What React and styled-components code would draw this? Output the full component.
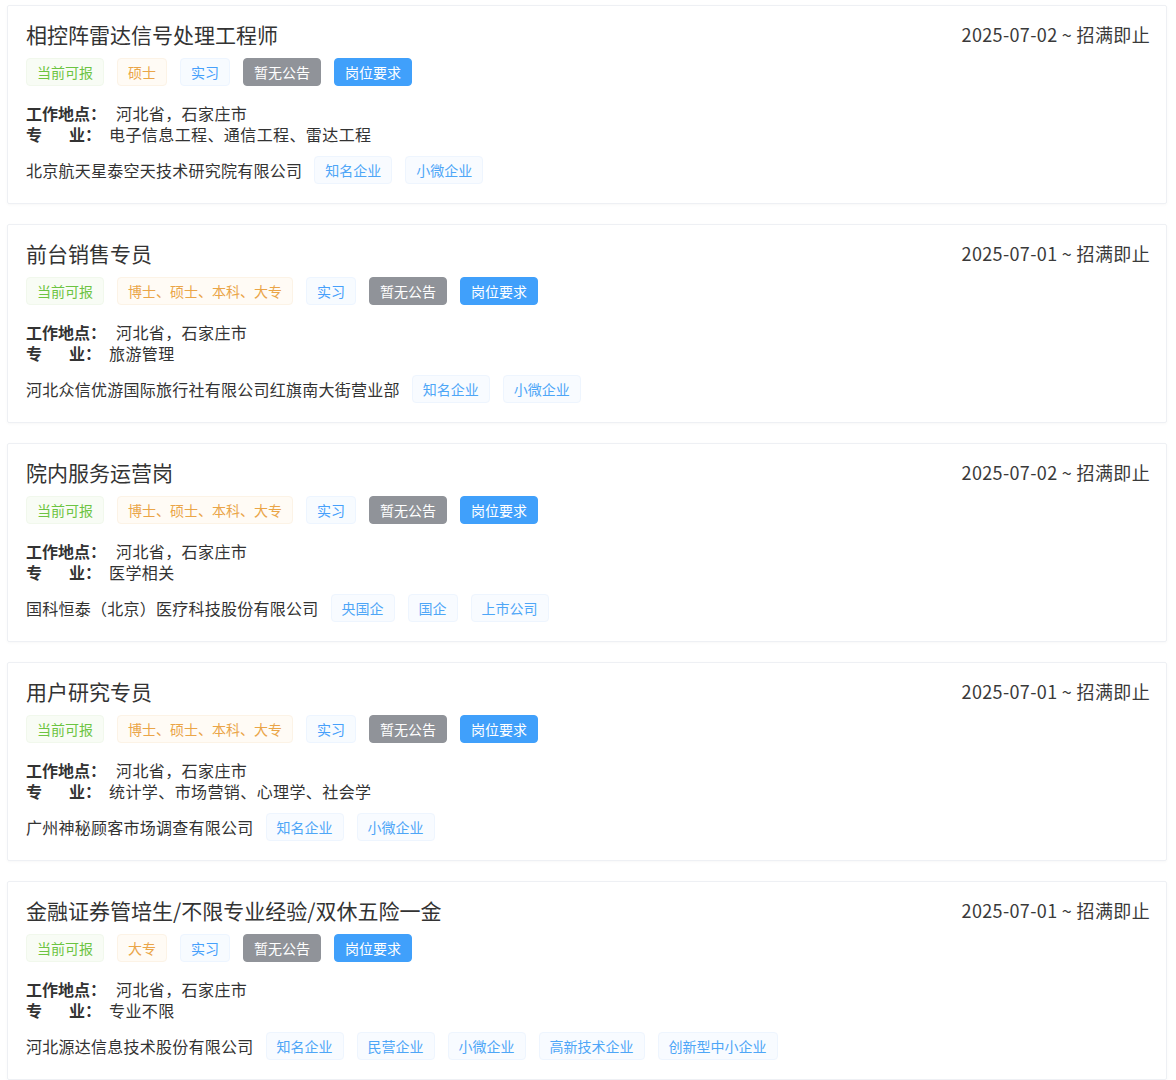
import React from "react";
import styled, { createGlobalStyle } from "styled-components";

const Global = createGlobalStyle`
  html, body { margin: 0; padding: 0; background: #fff; }
  body { font-family: "Noto Sans CJK SC", "Noto Sans", sans-serif; color: #333; }
`;

const List = styled.div`
  display: flex;
  flex-direction: column;
  gap: 20px;
  padding: 5px 9px 0 7px;
`;

const Card = styled.div`
  box-sizing: border-box;
  height: 199px;
  border: 1px solid #eef0f4;
  border-radius: 2px;
  box-shadow: 0 1px 3px rgba(0, 0, 0, 0.03);
  padding: 17px 16px 0 18px;
  display: flex;
  flex-direction: column;
`;

const Head = styled.div`
  display: flex;
  justify-content: space-between;
  align-items: center;
  height: 22px;
`;

const Title = styled.div`
  font-size: 21px;
  line-height: 22px;
  color: #333;
`;

const Date = styled.div`
  font-size: 18px;
  line-height: 22px;
  letter-spacing: 0.35px;
  color: #3a3a3a;
`;

const TagRow = styled.div`
  display: flex;
  gap: 13px;
  margin-top: 13px;
`;

const palette = {
  green: { c: "#6cc442", bg: "#f8fcf5", b: "#f1f8ec" },
  orange: { c: "#eaa548", bg: "#fffbf5", b: "#fcf3e6" },
  blue: { c: "#46a0fb", bg: "#f7fbff", b: "#edf5ff" },
  gray: { c: "#ffffff", bg: "#909399", b: "#909399" },
  primary: { c: "#ffffff", bg: "#40a0fb", b: "#40a0fb" },
};

const Tag = styled.span`
  box-sizing: border-box;
  display: inline-flex;
  align-items: center;
  height: 28px;
  padding: 0 10px;
  font-size: 14px;
  border-radius: 4px;
  border: 1px solid ${(p) => palette[p.$kind].b};
  background: ${(p) => palette[p.$kind].bg};
  color: ${(p) => palette[p.$kind].c};
  white-space: nowrap;
`;

const Info = styled.div`
  margin-top: 17px;
  display: flex;
  flex-direction: column;
  font-size: 16px;
  line-height: 21px;
`;

const InfoLine = styled.div`
  display: flex;
  align-items: center;
  height: 21px;
`;

const Label = styled.span`
  font-weight: bold;
  color: #333;
  display: inline-flex;
`;

const Gap = styled.span`
  display: inline-block;
  width: 27px;
`;

const Value = styled.span`
  margin-left: ${(p) => p.$ml}px;
  letter-spacing: 0.4px;
  color: #333;
`;

const CompanyRow = styled.div`
  margin-top: 11px;
  display: flex;
  align-items: center;
  gap: 13px;
`;

const Company = styled.span`
  font-size: 16px;
  letter-spacing: 0.25px;
  color: #333;
  margin-right: -1px;
`;

const ETag = styled.span`
  box-sizing: border-box;
  display: inline-flex;
  align-items: center;
  height: 28px;
  padding: 0 10px;
  font-size: 14px;
  border-radius: 4px;
  border: 1px solid #eef5fe;
  background: #f8fbff;
  color: #4ea6f7;
`;

const jobs = [
  {
    title: "相控阵雷达信号处理工程师",
    date: "2025-07-02 ~ 招满即止",
    edu: "硕士",
    major: "电子信息工程、通信工程、雷达工程",
    company: "北京航天星泰空天技术研究院有限公司",
    tags: ["知名企业", "小微企业"],
  },
  {
    title: "前台销售专员",
    date: "2025-07-01 ~ 招满即止",
    edu: "博士、硕士、本科、大专",
    major: "旅游管理",
    company: "河北众信优游国际旅行社有限公司红旗南大街营业部",
    tags: ["知名企业", "小微企业"],
  },
  {
    title: "院内服务运营岗",
    date: "2025-07-02 ~ 招满即止",
    edu: "博士、硕士、本科、大专",
    major: "医学相关",
    company: "国科恒泰（北京）医疗科技股份有限公司",
    tags: ["央国企", "国企", "上市公司"],
  },
  {
    title: "用户研究专员",
    date: "2025-07-01 ~ 招满即止",
    edu: "博士、硕士、本科、大专",
    major: "统计学、市场营销、心理学、社会学",
    company: "广州神秘顾客市场调查有限公司",
    tags: ["知名企业", "小微企业"],
  },
  {
    title: "金融证券管培生/不限专业经验/双休五险一金",
    date: "2025-07-01 ~ 招满即止",
    edu: "大专",
    major: "专业不限",
    company: "河北源达信息技术股份有限公司",
    tags: ["知名企业", "民营企业", "小微企业", "高新技术企业", "创新型中小企业"],
  },
];

export default function App() {
  return (
    <>
      <Global />
      <List>
        {jobs.map((j, i) => (
          <Card key={i}>
            <Head>
              <Title>{j.title}</Title>
              <Date>{j.date}</Date>
            </Head>
            <TagRow>
              <Tag $kind="green">当前可报</Tag>
              <Tag $kind="orange">{j.edu}</Tag>
              <Tag $kind="blue">实习</Tag>
              <Tag $kind="gray">暂无公告</Tag>
              <Tag $kind="primary">岗位要求</Tag>
            </TagRow>
            <Info>
              <InfoLine>
                <Label>工作地点：</Label>
                <Value $ml={10}>河北省，石家庄市</Value>
              </InfoLine>
              <InfoLine>
                <Label>
                  专<Gap />业：
                </Label>
                <Value $ml={8}>{j.major}</Value>
              </InfoLine>
            </Info>
            <CompanyRow>
              <Company>{j.company}</Company>
              {j.tags.map((t) => (
                <ETag key={t}>{t}</ETag>
              ))}
            </CompanyRow>
          </Card>
        ))}
      </List>
    </>
  );
}
